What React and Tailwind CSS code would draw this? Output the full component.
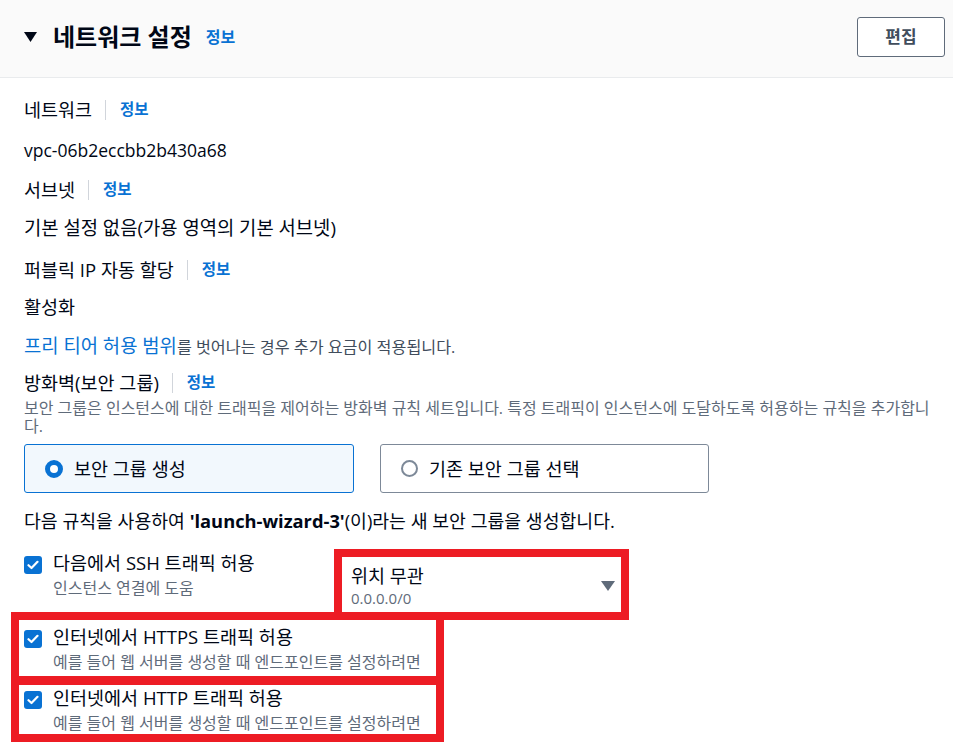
import React from "react";

const FONT = { fontFamily: '"Open Sans", "Noto Sans CJK KR", sans-serif' };

function Info() {
  return (
    <span className="flex items-center">
      <span className="ml-[13px] mr-[14px] h-5 w-px bg-[#d1d5db]" />
      <span className="text-[15.5px] font-bold text-[#0972d3]">정보</span>
    </span>
  );
}

function Check() {
  return (
    <span className="mt-[5px] flex h-[18px] w-[18px] shrink-0 items-center justify-center rounded-[3px] bg-[#0972d3]">
      <svg width="12" height="10" viewBox="0 0 12 10" fill="none">
        <path d="M1.5 5.2 L4.5 8 L10.5 1.8" stroke="white" strokeWidth="2.2" strokeLinecap="round" strokeLinejoin="round" />
      </svg>
    </span>
  );
}

function CheckRow({ title, sub, className = "" }) {
  return (
    <div className={"flex gap-[11px] " + className}>
      <Check />
      <div className="flex flex-col">
        <span className="text-[18.5px] leading-[24px] text-[#000716]">{title}</span>
        <span className="mt-[3px] text-[16px] leading-[20px] text-[#5f6b7a]">{sub}</span>
      </div>
    </div>
  );
}

export default function App() {
  return (
    <div className="relative min-h-[751px] w-[953px] overflow-hidden bg-white text-[#000716]" style={FONT}>
      {/* Header */}
      <div className="flex h-[78px] items-center justify-between border-b border-[#e9ebed] bg-[#fafafa] pb-[3px] pl-6 pr-2">
        <div className="flex items-center">
          <svg width="13" height="10" viewBox="0 0 13 10" className="mr-4">
            <path d="M0 0 H13 L6.5 10 Z" fill="#000716" />
          </svg>
          <span className="text-[24px] font-bold leading-none">네트워크 설정</span>
          <span className="ml-[14px] text-[16px] font-bold text-[#0972d3]">정보</span>
        </div>
        <button className="flex h-[40px] w-[88px] items-center justify-center rounded-[3px] border border-[#5f6b7a] bg-white text-[17px] font-bold text-[#414d5c]">
          편집
        </button>
      </div>

      {/* Body */}
      <div className="pl-6 pr-2 pt-5">
        <div className="flex h-6 items-center text-[18.5px]">
          <span>네트워크</span>
          <Info />
        </div>
        <div className="mt-4 h-6 text-[17.5px] leading-[24px]">vpc-06b2eccbb2b430a68</div>

        <div className="mt-4 flex h-6 items-center text-[18.5px]">
          <span>서브넷</span>
          <Info />
        </div>
        <div className="mt-[14px] h-6 text-[18.8px] leading-[24px]">기본 설정 없음(가용 영역의 기본 서브넷)</div>

        <div className="mt-[18px] flex h-6 items-center text-[18.5px]">
          <span>퍼블릭 IP 자동 할당</span>
          <Info />
        </div>
        <div className="mt-[13px] h-6 text-[18.5px] leading-[24px]">활성화</div>

        <div className="mt-[15px] h-6 leading-[24px]">
          <span className="text-[18.8px] text-[#0972d3]">프리 티어 허용 범위</span>
          <span className="text-[16.2px] text-[#414d5c]">를 벗어나는 경우 추가 요금이 적용됩니다.</span>
        </div>

        <div className="mt-[13px] flex h-6 items-center text-[18.5px]">
          <span>방화벽(보안 그룹)</span>
          <Info />
        </div>
        <div className="mt-1 text-[16px] leading-[18px] text-[#5f6b7a]">
          보안 그룹은 인스턴스에 대한 트래픽을 제어하는 방화벽 규칙 세트입니다. 특정 트래픽이 인스턴스에 도달하도록 허용하는 규칙을 추가합니다.
        </div>

        <div className="mt-[9px] flex gap-[26px]">
          <div className="flex h-[49px] w-[330px] items-center gap-[11px] rounded-[3px] border border-[#0972d3] bg-[#f2f8fd] pl-5">
            <span className="h-[18px] w-[18px] rounded-full border-[5px] border-[#0972d3] bg-white" />
            <span className="text-[18.5px]">보안 그룹 생성</span>
          </div>
          <div className="flex h-[49px] w-[329px] items-center gap-[11px] rounded-[3px] border border-[#7d8998] bg-white pl-5">
            <span className="h-[17px] w-[17px] rounded-full border-2 border-[#7d8998] bg-white" />
            <span className="text-[18.5px]">기존 보안 그룹 선택</span>
          </div>
        </div>

        <div className="mt-4 h-6 text-[18.3px] leading-[24px]">
          다음 규칙을 사용하여 <span className="font-bold">'launch-wizard-3'</span>(이)라는 새 보안 그룹을 생성합니다.
        </div>

        <div className="mt-[18px] flex">
          <CheckRow title="다음에서 SSH 트래픽 허용" sub="인스턴스 연결에 도움" className="w-[318px]" />
          <div className="mt-[7px] flex h-[55px] w-[279px] items-center justify-between bg-white pl-[9px] pr-[6px]">
            <div className="flex flex-col">
              <span className="text-[18.5px] leading-[24px]">위치 무관</span>
              <span className="text-[15px] leading-[20px] text-[#5f6b7a]">0.0.0.0/0</span>
            </div>
            <svg width="14" height="10" viewBox="0 0 14 10">
              <path d="M0 0 H14 L7 10 Z" fill="#5f6b7a" />
            </svg>
          </div>
        </div>

        <CheckRow title="인터넷에서 HTTPS 트래픽 허용" sub="예를 들어 웹 서버를 생성할 때 엔드포인트를 설정하려면" className="mt-[12px]" />
        <CheckRow title="인터넷에서 HTTP 트래픽 허용" sub="예를 들어 웹 서버를 생성할 때 엔드포인트를 설정하려면" className="mt-[14px]" />
      </div>

      {/* Red annotation boxes */}
      <div className="pointer-events-none absolute left-[334px] top-[549px] h-[71px] w-[295px] border-[8px] border-[#ed1c24]" />
      <div className="pointer-events-none absolute left-[11px] top-[612px] h-[72px] w-[433px] border-[8px] border-[#ed1c24]" />
      <div className="pointer-events-none absolute left-[11px] top-[677px] h-[65px] w-[433px] border-[8px] border-[#ed1c24]" />
    </div>
  );
}
